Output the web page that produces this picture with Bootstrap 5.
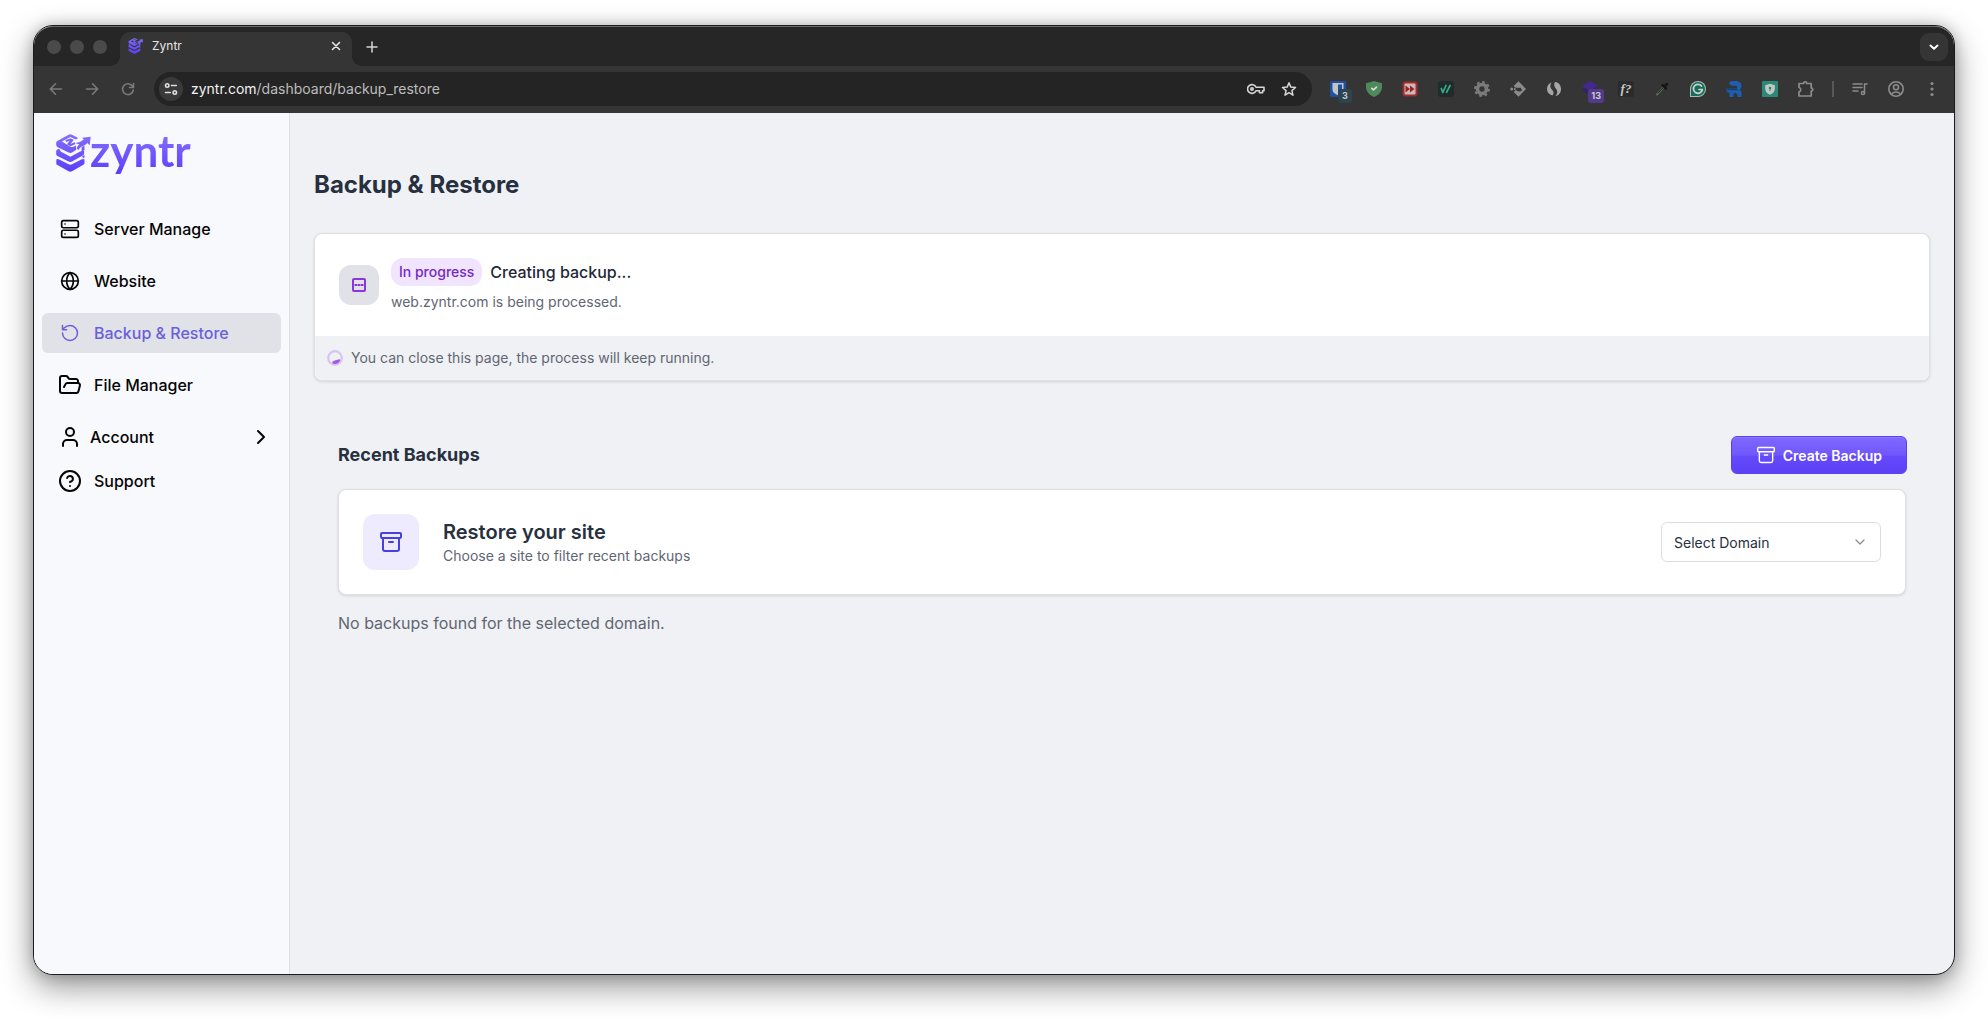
<!DOCTYPE html>
<html lang="en">
<head>
<meta charset="utf-8">
<meta name="viewport" content="width=device-width, initial-scale=1">
<title>Zyntr</title>
<link href="https://cdn.jsdelivr.net/npm/bootstrap@5.3.0/dist/css/bootstrap.min.css" rel="stylesheet">
<style>
  body { font-family: Inter, "Liberation Sans", sans-serif; background: #fff; color: #1f2937; padding: 25px 33px 42px; }
  svg { display: block; flex: none; }
  .ln { fill: none; stroke: currentColor; stroke-width: 2; stroke-linecap: round; stroke-linejoin: round; }
  .win { border: 1px solid #1c1c1e; border-radius: 20px; box-shadow: 0 12px 32px rgba(0,0,0,.42), 0 0 14px rgba(0,0,0,.2); background: #f0f1f4; }

  /* browser frame */
  .tabstrip { height: 40px; background: #262626; border-top: 1px solid #6a6a6a; padding-left: 13px; padding-right: 6px; border-radius: 19px 19px 0 0; }
  .light { width: 14px; height: 14px; border-radius: 50%; background: #4a4a4a; }
  .tab { position: relative; width: 232px; height: 34px; margin-left: 13px; padding: 0 10px 6px 8px; background: #353535; border-radius: 10px 10px 0 0; color: #e6e6e6; font-size: 12px; }
  .tab::before, .tab::after { content: ""; position: absolute; bottom: 0; width: 10px; height: 10px; }
  .tab::before { left: -10px; background: radial-gradient(circle at 0 0, transparent 10px, #353535 10px); }
  .tab::after { right: -10px; background: radial-gradient(circle at 100% 0, transparent 10px, #353535 10px); }
  .bare { border: 0; background: none; padding: 0; color: inherit; display: flex; align-items: center; justify-content: center; }
  .newtab { margin-left: 14px; color: #d5d5d5; }
  .tabmenu { width: 28px; height: 28px; border-radius: 9px; background: #353535; color: #fff; }
  .toolbar { height: 47px; background: #353535; padding: 0 4px 2px 0; color: #8c8c8c; }
  .slot { width: 36px; height: 36px; flex: none; position: relative; }
  .omni { height: 34px; border-radius: 17px; background: #242424; padding: 0 15px 0 5px; margin: 0 8px; color: #d5d5d5; min-width: 0; }
  .siteinfo { width: 24px; height: 24px; border-radius: 50%; background: #3a3a3a; color: #e0e0e0; flex: none; }
  .addr { font-size: 14px; color: #bdbdbd; min-width: 0; margin-left: 8px; white-space: nowrap; overflow: hidden; }
  .addr b { font-weight: 400; color: #f2f2f2; }
  .cnt { position: absolute; right: 4px; top: 18px; height: 14px; min-width: 14px; padding: 0 3px; border-radius: 3px; font-size: 9px; line-height: 14px; font-weight: 700; color: #c9c9c9; text-align: center; }

  /* app */
  .side { width: 256px; flex: none; background: #f8f9fc; border-right: 1px solid #dfe1e5; padding: 16px 8px; border-radius: 0 0 0 19px; }
  .brand { padding-left: 14px; height: 48px; text-decoration: none; }
  .brand span { font: 700 44px/44px Lato, sans-serif; margin-left: -2px; padding-bottom: 6px; background: linear-gradient(#7f6bff 20%, #5b3ffb 90%); -webkit-background-clip: text; background-clip: text; color: transparent; }
  .item { display: flex; align-items: center; width: 100%; height: 40px; border: 0; background: none; border-radius: 6px; padding: 0 16px; font-size: 16px; font-weight: 500; color: #050505; text-decoration: none; text-align: left; }
  .item .ic { width: 24px; display: flex; justify-content: center; margin-right: 12px; }
  .item.on { background: #e1e2e8; color: #6a5fdc; }
  .item.acct { padding-right: 8px; }
  .item.acct .ic { margin-right: 8px; }
  .page { padding: 56px 24px; min-width: 0; }
  h1 { font-size: 24px; line-height: 32px; font-weight: 700; margin: 0 0 32px; color: #27303f; }
  .panel { border: 1px solid #dfe0e3; border-radius: 8px; box-shadow: 0 1px 3px rgba(0,0,0,.12); background: #fff; overflow: hidden; }
  .tile { width: 40px; height: 40px; border-radius: 12px; background: #e1e2e8; color: #8a35e0; flex: none; }
  .tile.big { width: 56px; height: 56px; background: #eeebff; color: #4540de; }
  .pill { background: #f1e4fe; color: #7429c9; font-size: 14px; line-height: 20px; font-weight: 500; padding: 4px 8px; border-radius: 12px; }
  .strong16 { font-size: 16px; line-height: 24px; font-weight: 500; color: #1f2937; }
  .sub { font-size: 14px; line-height: 20px; color: #5f6673; }
  .foot { background: #f0f1f4; height: 44px; padding: 0 12px; gap: 8px; }
  .recent { padding-top: 55px; }
  h2 { font-size: 18px; line-height: 28px; font-weight: 700; margin: 0; color: #27303f; }
  h3 { font-size: 20px; line-height: 28px; font-weight: 600; margin: 0; color: #27303f; }
  .btn-make { height: 38px; padding: 0 24px; border: 1px solid #5a43ee; border-radius: 6px; color: #fff; font-size: 14px; font-weight: 600; background: linear-gradient(#7d68ff, #7157fb 50%, #6549fb 54%, #5c42f6); box-shadow: inset 0 1px 0 rgba(255,255,255,.12); display: flex; align-items: center; gap: 7px; margin-right: -1px; }
  .btn-make:hover { color: #fff; }
  .pick { width: 220px; height: 40px; font-size: 14px; color: #27303f; border: 1px solid #dcdde1; border-radius: 6px; padding: 0 40px 0 12px;
    background-image: url("data:image/svg+xml,%3Csvg xmlns='http://www.w3.org/2000/svg' viewBox='0 0 12 12' fill='none' stroke='%23868b94' stroke-width='1.3' stroke-linecap='round' stroke-linejoin='round'%3E%3Cpath d='M2 4l4 4 4-4'/%3E%3C/svg%3E"); background-size: 12px 12px; background-position: right 14px center; }
  .none { font-size: 16px; line-height: 24px; color: #5f6673; }
</style>
</head>
<body class="min-vh-100 d-flex flex-column">
<svg width="0" height="0" class="position-absolute" aria-hidden="true">
  <defs>
    <linearGradient id="vio" gradientUnits="userSpaceOnUse" x1="0" y1="0" x2="0" y2="38"><stop offset="0" stop-color="#836fff"/><stop offset="1" stop-color="#5a3dfb"/></linearGradient>
    <symbol id="mark-z" viewBox="0 0 36 38">
      <g fill="url(#vio)">
        <path fill-rule="evenodd" d="M12.600.8q1.700-.9 3.400 0l6.200 3.200-2.400 1.500-5.500-2.600L5.800 7.600l3 1.700 5.700 3.400q2.200 1 4.200-.4l1.300-.8.3 4.200-4.300 2.800q-1.700.8-3.400 0L1.800 13.200Q.2 12.300.2 10.400V8.600q.1-1 1.100-1.700z"/>
        <path d="M9 6.200l5.300-2 3.500 1.600-3.200 4.200 4-1.700 1 1.700-5.200 2.300-3.400-2 2.600-3.500-3.200 1.100z"/>
        <path d="M19.500 8.900q5.200-.6 8.300-3.500l-1.700-1.600 8.600-1-1 8.400-2.300-2.100q-2.200 2.600-6 3.700-2.400.8-2.400 3l-2-.8q-.2-3.300 2.600-4.200z"/>
        <path d="M25.600 13.200l2.900-1.500v3.500q0 1.200-2.900 2.400z"/>
        <path d="M.2 17q0-1 1-1.500l2-.7 1.500 2.700 9.700 5.200 9.800-5.200 4-1.200q.2 3.800-.5 4.700L16 27.500q-1.700.9-3.400 0L1.400 21.900Q.2 21.200.2 20.200z"/>
        <path d="M.3 25.500q.8-1 2.400-.2l10 5q1.600.8 3.300 0l9.800-5q1.900-.8 2.700.3v3.500q0 1-1.100 1.600L16 37.200q-1.700.9-3.400 0L1.400 31Q.3 30.400.3 29.400z"/>
        <path d="M26 22.400l2.500-1.300v2.500l-1.300.5z"/>
      </g>
    </symbol>
    <symbol id="box" viewBox="0 0 24 24"><rect x="2" y="3" width="20" height="5" rx="1"/><path d="M4 8v11a2 2 0 0 0 2 2h12a2 2 0 0 0 2-2V8M10 12h4"/></symbol>
  </defs>
</svg>

<div class="win flex-grow-1 d-flex flex-column">
  <header>
    <div class="tabstrip d-flex align-items-center">
      <div class="d-flex" style="gap:9px"><span class="light"></span><span class="light"></span><span class="light"></span></div>
      <div class="tab d-flex align-items-center align-self-end">
        <svg width="16" height="16"><use href="#mark-z"/></svg>
        <span class="ms-2 flex-grow-1">Zyntr</span>
        <button class="bare" aria-label="Close tab"><svg class="ln" width="12" height="12" viewBox="0 0 12 12" style="stroke-width:1.600"><path d="M2.500 2.500l7 7M9.500 2.500l-7 7"/></svg></button>
      </div>
      <button class="bare newtab" aria-label="New tab"><svg class="ln" width="12" height="12" viewBox="0 0 12 12" style="stroke-width:1.500"><path d="M6 1v10M1 6h10"/></svg></button>
      <button class="bare tabmenu ms-auto" aria-label="Search tabs"><svg class="ln" width="12" height="12" viewBox="0 0 12 12"><path d="M2.500 4.500L6 7.700l3.500-3.200"/></svg></button>
    </div>

    <div class="toolbar d-flex align-items-center">
      <div class="d-flex ps-1" style="color:#7a7a7a">
        <button class="bare slot" aria-label="Back"><svg class="ln" width="14" height="14" viewBox="0 0 14 14" style="stroke-width:1.600"><path d="M12.500 7H1.500M6.500 1.800L1.300 7l5.200 5.200"/></svg></button>
        <button class="bare slot" aria-label="Forward"><svg class="ln" width="14" height="14" viewBox="0 0 14 14" style="stroke-width:1.600"><path d="M1.500 7h11M7.500 1.800L12.700 7l-5.200 5.200"/></svg></button>
        <button class="bare slot" aria-label="Reload"><svg class="ln" width="14" height="14" viewBox="0 0 14 14" style="stroke-width:1.600"><path d="M12 5.200A5.400 5.400 0 1 0 12.300 8M12.500 1.500v4H8.500"/></svg></button>
      </div>
      <div class="omni d-flex align-items-center flex-grow-1">
        <button class="bare siteinfo" aria-label="Site information"><svg class="ln" width="14" height="14" viewBox="0 0 14 14" style="stroke-width:1.600"><circle cx="3.200" cy="3.500" r="1.700"/><path d="M7.500 3.500h4.800M1.500 10.500h4.800"/><circle cx="10.800" cy="10.500" r="1.700"/></svg></button>
        <div class="addr flex-grow-1"><b>zyntr.com</b>/dashboard/backup_restore</div>
        <svg class="ln me-3" width="18" height="12" viewBox="0 0 18 12" style="stroke-width:1.600"><path d="M9 4.300A4.400 4.400 0 1 0 9 7.700h3.400v2h3.200v-2h1.400V4.300z"/><circle cx="5" cy="6" r="1.200"/></svg>
        <svg class="ln" width="16" height="16" viewBox="0 0 16 16" style="stroke-width:1.500"><path d="M8 1.700l1.800 4.400 4.700.4-3.600 3.100 1.100 4.600L8 11.700l-4 2.500 1.100-4.600L1.500 6.500l4.700-.4z"/></svg>
      </div>

      <div class="d-flex">
        <span class="bare slot"><svg width="16" height="16" viewBox="0 0 16 16"><rect width="16" height="16" rx="2" fill="#1f50a8"/><path d="M2.500 2h11v6.500c0 3-3 4.800-5.500 5.700C5.500 13.300 2.500 11.500 2.500 8.500z" fill="#c4c4c4"/><path d="M8 3.600h4v5c0 2-2.300 3.200-4 4z" fill="#1f50a8"/></svg><span class="cnt" style="background:#2c4350">3</span></span>
        <span class="bare slot"><svg width="16" height="16" viewBox="0 0 16 16"><path d="M8 0l8 2.200v3.500C16 10.500 12.700 14 8 16 3.300 14 0 10.500 0 5.700V2.200z" fill="#4f8a5b"/><path class="ln" d="M5.800 7.300l1.700 1.600 3-2.700" style="stroke:#dcdcdc;stroke-width:1.600"/></svg></span>
        <span class="bare slot"><svg width="16" height="16" viewBox="0 0 16 16"><rect x=".5" y=".5" width="15" height="15" rx="3" fill="#a52a2c"/><rect x="2.500" y="2.500" width="11" height="11" rx="1" fill="#c9b9b9"/><path d="M3.500 4.500L8 8l-4.500 3.500zM8 4.500L12.500 8 8 11.500z" fill="#9c2226"/></svg></span>
        <span class="bare slot"><svg width="16" height="16" viewBox="0 0 16 16"><rect width="16" height="16" rx="3" fill="#222a2c"/><path class="ln" d="M3.300 7.500l1.500 4L8 4.500M8.500 11.300l3.600-6.800" style="stroke:#30b08c;stroke-width:1.700"/></svg></span>
        <span class="bare slot"><svg width="16" height="16" viewBox="0 0 16 16" fill="none" stroke="#7b7b7b"><circle cx="8" cy="8" r="4.500" stroke-width="3.600"/><circle cx="8" cy="8" r="7" stroke-width="2" stroke-dasharray="2.750 2.750"/></svg></span>
        <span class="bare slot"><svg width="16" height="16" viewBox="0 0 16 16" fill="#8b8b8b"><path fill-rule="evenodd" d="M8.500.3L16 8l-7.500 7.700L3.800 11l2-1.900q3.700 2.800 6.200.4l-1.200-2.700H5.600L3.700 5z"/><circle cx="1.700" cy="8" r="1.500"/><circle cx="4.800" cy="8" r="1"/></svg></span>
        <span class="bare slot"><svg width="16" height="16" viewBox="0 0 16 16" fill="#a6a6a6"><path d="M5.500 1.500C2.500 2.500 1 5 1 8s1.800 5.700 5.500 6.600C8.300 12 7.500 10.300 5.800 8.500 4 6.500 3.800 4 5.500 1.500z"/><path d="M9 1c3.800.3 6 3.300 6 7s-2 6.300-5.500 7c2.200-2.300 2.300-4.800.7-7C8.600 5.900 7.400 3.800 9 1z"/></svg></span>
        <span class="bare slot"><svg width="16" height="16" viewBox="0 0 16 16"><path d="M8 0l8 5-8 4.500L0 5z" fill="#43288f"/><path d="M0 9l3-1.700 5 2.900 5-2.900L16 9l-8 4.700z" fill="#351f77"/></svg><span class="cnt" style="background:#543a8c">13</span></span>
        <span class="bare slot"><span style="width:16px;height:16px;border-radius:2px;background:#2b2b2b;color:#c8c8c8;font:italic 700 13px/15px 'Liberation Serif',serif;text-align:center">f?</span></span>
        <span class="bare slot"><svg width="16" height="16" viewBox="0 0 16 16" fill="none" stroke-linecap="round"><path d="M3 13.500L10 6" stroke="#56705a" stroke-width="2"/><path d="M4 12l5-5" stroke="#1f2a20"/><path d="M8.500 4.200l3.300 3.300M10.500 5.500L13 3" stroke="#151515" stroke-width="2.500"/></svg></span>
        <span class="bare slot"><svg width="16" height="16" viewBox="0 0 16 16"><path d="M0 16V8a8 8 0 1 1 8 8z" fill="#a9bdb8"/><path d="M1 15V8a7 7 0 1 1 7 7z" fill="#176c5a"/><path class="ln" d="M11.500 5A4.500 4.500 0 1 0 12.400 8.500H9" style="stroke:#d0d0d0;stroke-width:1.700"/></svg></span>
        <span class="bare slot"><svg width="16" height="16" viewBox="0 0 16 16"><path fill-rule="evenodd" d="M3 2Q4 0 6 0h4.500Q15.500.5 15.500 5q0 2.500-1.800 4 2.300 1 1.800 3.500V16h-4v-2.500L9.500 11.500 7.500 13v3h-4v-4.500H2Q0 10.500 0 7.500h10.500q1.500-1.300 0-2.800H6Q3.500 4.500 3 2z" fill="#1d5fae"/><path d="M0 7.500h10.500l2.500 1.800H1z" fill="#17407f"/></svg></span>
        <span class="bare slot"><svg width="16" height="16" viewBox="0 0 16 16"><rect width="16" height="16" rx="1" fill="#298a77"/><path d="M8 2.700l4.800 1.500v3.500c0 3-2 4.800-4.800 6-2.800-1.200-4.800-3-4.800-6V4.200z" fill="#c6c6c6"/><circle cx="8" cy="7" r="1.300" fill="#298a77"/><path d="M7.500 7h1v3h-1z" fill="#298a77"/></svg></span>
        <button class="bare slot" aria-label="Extensions"><svg class="ln" width="18" height="18" viewBox="0 0 18 18" style="stroke-width:1.700"><path d="M2 3.500h4.500a1.600 1.600 0 0 1 3.200 0h4.500V8a1.600 1.600 0 0 1 0 3.200V16H2v-4.200a2.200 2.200 0 0 0 0-4.300z"/></svg></button>
        <span class="d-flex align-items-center justify-content-center" style="width:18px"><span style="width:2px;height:16px;background:#575757"></span></span>
        <button class="bare slot" aria-label="Media"><svg class="ln" width="16" height="14" viewBox="0 0 16 14" style="stroke-width:1.500"><path d="M1 2h9M1 5.500h9M1 9h5M12.500 11V2h2.500"/><circle cx="11" cy="11" r="1.600"/></svg></button>
        <button class="bare slot" aria-label="Profile"><svg class="ln" width="18" height="18" viewBox="0 0 18 18" style="stroke-width:1.600"><circle cx="9" cy="9" r="7.200"/><circle cx="9" cy="7.200" r="2.500"/><path d="M4.200 14q4.800-4 9.600 0"/></svg></button>
        <button class="bare slot" aria-label="Menu"><svg width="4" height="16" viewBox="0 0 4 16" fill="currentColor"><circle cx="2" cy="2.500" r="1.600"/><circle cx="2" cy="8" r="1.600"/><circle cx="2" cy="13.500" r="1.600"/></svg></button>
      </div>
    </div>
  </header>

  <div class="d-flex flex-grow-1">
    <aside class="side">
      <a href="#" class="brand d-flex align-items-center" aria-label="zyntr">
        <svg width="36" height="38"><use href="#mark-z"/></svg><span>zyntr</span>
      </a>
      <nav class="d-flex flex-column mt-4 pt-2">
        <div class="d-flex flex-column" style="gap:12px">
          <a class="item" href="#"><span class="ic"><svg class="ln" width="20" height="20" viewBox="0 0 24 24"><rect x="2" y="2" width="20" height="8.500" rx="2"/><rect x="2" y="13.500" width="20" height="8.500" rx="2"/><path d="M6 6h.01M6 18h.01"/></svg></span>Server Manage</a>
          <a class="item" href="#"><span class="ic"><svg class="ln" width="20" height="20" viewBox="0 0 24 24"><circle cx="12" cy="12" r="10"/><path d="M12 2c3 3 4 6.500 4 10s-1 7-4 10c-3-3-4-6.500-4-10s1-7 4-10zM2 12h20"/></svg></span>Website</a>
          <a class="item on" href="#" aria-current="page"><span class="ic"><svg class="ln" width="20" height="20" viewBox="0 0 24 24" style="stroke-width:1.800"><path d="M3 12a9 9 0 1 0 9-9 9.750 9.750 0 0 0-6.740 2.740L3 8M3 3v5h5"/></svg></span>Backup &amp; Restore</a>
          <a class="item" href="#"><span class="ic"><svg class="ln" width="24" height="24" viewBox="0 0 24 24"><path d="M6 14l1.500-2.900A2 2 0 0 1 9.240 10H20a2 2 0 0 1 1.940 2.500l-1.540 6a2 2 0 0 1-1.950 1.500H4a2 2 0 0 1-2-2V5a2 2 0 0 1 2-2h3.900a2 2 0 0 1 1.690.9l.81 1.200a2 2 0 0 0 1.670.9H18a2 2 0 0 1 2 2v2"/></svg></span>File Manager</a>
          <button class="item acct" type="button"><span class="ic"><svg class="ln" width="24" height="24" viewBox="0 0 24 24"><path d="M19 21v-2a4 4 0 0 0-4-4H9a4 4 0 0 0-4 4v2"/><circle cx="12" cy="7" r="4"/></svg></span>Account<svg class="ln ms-auto" width="24" height="24" viewBox="0 0 24 24"><path d="M9 18l6-6-6-6"/></svg></button>
        </div>
        <a class="item mt-1" href="#"><span class="ic"><svg class="ln" width="24" height="24" viewBox="0 0 24 24"><circle cx="12" cy="12" r="10"/><path d="M9.090 9a3 3 0 0 1 5.830 1c0 2-3 3-3 3M12 17h.01"/></svg></span>Support</a>
      </nav>
    </aside>

    <main class="page flex-grow-1">
      <h1>Backup &amp; Restore</h1>

      <section class="panel">
        <div class="d-flex align-items-center p-4">
          <div class="tile d-flex align-items-center justify-content-center"><svg width="14" height="14" viewBox="0 0 14 14" fill="none" stroke="currentColor" stroke-width="2"><rect x="1" y="1" width="12" height="12" rx="1"/><path d="M2 7h10" stroke-width="1"/><path d="M3 7h2M6 7h2M9 7h2"/></svg></div>
          <div style="margin-left:12px">
            <div class="d-flex align-items-center gap-2"><span class="pill">In progress</span><span class="strong16">Creating backup...</span></div>
            <div class="sub" style="margin-top:6px">web.zyntr.com is being processed.</div>
          </div>
        </div>
        <div class="foot d-flex align-items-center">
          <svg width="16" height="16" viewBox="0 0 16 16"><circle cx="8" cy="8" r="6.800" fill="none" stroke="#d9c3f3" stroke-width="2.200"/><path d="M5.300 13.300q-.5-1.800 1.500-2.500l4.500-1.300q2-.5 2 .8-1 3-4.800 3.700-2 .2-3.200-.7z" fill="#a35be8"/></svg>
          <span class="sub">You can close this page, the process will keep running.</span>
        </div>
      </section>

      <section class="recent px-4">
        <div class="d-flex align-items-center justify-content-between">
          <h2>Recent Backups</h2>
          <button type="button" class="btn btn-make"><svg class="ln" width="20" height="20" style="stroke-width:1.700"><use href="#box"/></svg>Create Backup</button>
        </div>
        <div class="panel d-flex align-items-center p-4" style="margin-top:15px">
          <div class="tile big d-flex align-items-center justify-content-center"><svg class="ln" width="24" height="24"><use href="#box"/></svg></div>
          <div class="ms-4 me-auto">
            <h3>Restore your site</h3>
            <div class="sub">Choose a site to filter recent backups</div>
          </div>
          <select class="form-select pick" aria-label="Select Domain"><option>Select Domain</option></select>
        </div>
        <p class="none mb-0 mt-3">No backups found for the selected domain.</p>
      </section>
    </main>
  </div>
</div>
<script src="https://cdn.jsdelivr.net/npm/bootstrap@5.3.0/dist/js/bootstrap.bundle.min.js"></script>
</body>
</html>
